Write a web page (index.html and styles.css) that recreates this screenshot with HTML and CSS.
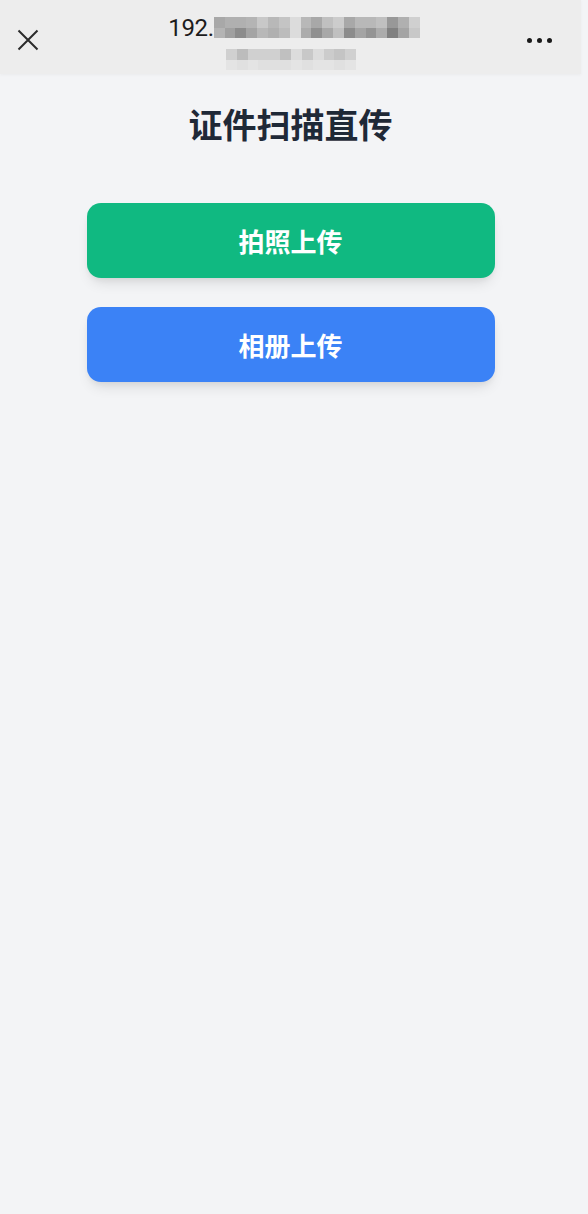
FILE: index.html
```html
<!DOCTYPE html>
<html lang="zh-CN">
<head>
<meta charset="utf-8">
<title>证件扫描直传</title>
<link rel="stylesheet" href="styles.css">
</head>
<body>
<div class="shell">
  <header class="topbar">
    <button class="icon-btn close" aria-label="关闭">
      <svg width="22" height="22" viewBox="0 0 22 22"><path d="M1.5 1.5 L20.5 20.5 M20.5 1.5 L1.5 20.5" stroke="#2b2b2b" stroke-width="2" fill="none"/></svg>
    </button>
    <div class="addr">
      <div class="addr-line">
        <span class="host">192.</span>
        <div class="mosaic m1">
          <i class="sa8"></i><i class="sb0"></i><i class="sb0"></i><i class="sb4"></i><i class="sc8"></i><i class="sb8"></i><i class="sc4"></i><i class="sdc"></i><i class="sb8"></i><i class="sa8"></i><i class="sc0"></i><i class="scc"></i><i class="sa8"></i><i class="sb8"></i><i class="sb8"></i><i class="sc0"></i><i class="s98"></i><i class="sb0"></i><i class="sd0"></i>
          <i class="sb4"></i><i class="sa0"></i><i class="s8c"></i><i class="sa4"></i><i class="sb8"></i><i class="sb0"></i><i class="sbc"></i><i class="sdc"></i><i class="sac"></i><i class="s90"></i><i class="sa8"></i><i class="sc0"></i><i class="s8c"></i><i class="sa4"></i><i class="s94"></i><i class="sac"></i><i class="s80"></i><i class="sa4"></i><i class="sc8"></i>
        </div>
      </div>
      <div class="mosaic m2">
        <i class="sd0"></i><i class="sbc"></i><i class="sd0"></i><i class="sd0"></i><i class="sd0"></i><i class="sc0"></i><i class="sdc"></i><i class="sc8"></i><i class="sdc"></i><i class="scc"></i><i class="sc4"></i><i class="sd0"></i>
        <i class="se4"></i><i class="se0"></i><i class="se4"></i><i class="se0"></i><i class="se0"></i><i class="se0"></i><i class="se4"></i><i class="se0"></i><i class="se4"></i><i class="se4"></i><i class="se0"></i><i class="se4"></i>
      </div>
    </div>
    <button class="icon-btn more" aria-label="更多">
      <span class="dot"></span><span class="dot"></span><span class="dot"></span>
    </button>
  </header>

  <main class="content">
    <h1 class="title">证件扫描直传</h1>
    <div class="actions">
      <button class="action green">拍照上传</button>
      <button class="action blue">相册上传</button>
    </div>
  </main>
</div>
</body>
</html>
```

FILE: styles.css
```css
* { box-sizing: border-box; }

html, body {
  margin: 0;
  padding: 0;
  background: #f3f4f6;
  height: 100%;
}

body {
  font-family: "Noto Sans CJK SC", "Noto Sans", sans-serif;
}

.shell {
  width: 581px;
  min-height: 1214px;
}

.topbar {
  height: 74px;
  background: #ededed;
  display: flex;
  align-items: center;
  justify-content: space-between;
  padding: 0 29px 0 17px;
  box-shadow: 0 1px 3px rgba(0,0,0,0.04);
}

.icon-btn {
  border: none;
  background: transparent;
  padding: 0;
  width: 40px;
  height: 40px;
  display: flex;
  align-items: center;
  cursor: pointer;
}

.close { justify-content: flex-start; margin-top: 6px; }

.more {
  justify-content: flex-end;
  gap: 5px;
  margin-top: 6px;
}

.dot {
  width: 5px;
  height: 5px;
  border-radius: 50%;
  background: #1a1a1a;
}

.addr {
  flex: 1;
  display: flex;
  flex-direction: column;
  align-items: center;
  padding-top: 12px;
  margin-left: 19px;
}

.addr-line {
  display: flex;
  align-items: flex-end;
}

.host {
  font-family: Roboto, "Noto Sans", sans-serif;
  font-size: 24px;
  line-height: 24px;
  color: #1c1c1c;
  letter-spacing: -0.3px;
  margin-bottom: -2px;
}

.mosaic {
  display: grid;
  grid-auto-rows: 10.5px;
}

.mosaic i { display: block; }

.m1 {
  grid-template-columns: repeat(19, 10.85px);
}

.m2 {
  grid-template-columns: repeat(12, 10.85px);
  margin-top: 11px;
  margin-left: -6px;
}

.s80 { background: #808080; }
.s8c { background: #8c8c8c; }
.s90 { background: #909090; }
.s94 { background: #949494; }
.s98 { background: #989898; }
.sa0 { background: #a0a0a0; }
.sa4 { background: #a4a4a4; }
.sa8 { background: #a8a8a8; }
.sac { background: #acacac; }
.sb0 { background: #b0b0b0; }
.sb4 { background: #b4b4b4; }
.sb8 { background: #b8b8b8; }
.sbc { background: #bcbcbc; }
.sc0 { background: #c0c0c0; }
.sc4 { background: #c4c4c4; }
.sc8 { background: #c8c8c8; }
.scc { background: #cccccc; }
.sd0 { background: #d0d0d0; }
.sdc { background: #dcdcdc; }
.se0 { background: #e0e0e0; }
.se4 { background: #e4e4e4; }

.content {
  display: flex;
  flex-direction: column;
  align-items: center;
}

.title {
  margin: 28px 0 0;
  font-size: 34px;
  line-height: 44px;
  font-weight: 700;
  color: #1f2937;
}

.actions {
  margin-top: 57px;
  display: flex;
  flex-direction: column;
  gap: 29px;
  width: 408px;
}

.action {
  height: 75px;
  border: none;
  border-radius: 14px;
  color: #ffffff;
  font-family: "Noto Sans CJK SC", "Noto Sans", sans-serif;
  font-size: 26px;
  font-weight: 700;
  letter-spacing: 0;
  cursor: pointer;
  box-shadow: 0 8px 14px -4px rgba(0,0,0,0.12), 0 3px 6px -2px rgba(0,0,0,0.06);
}

.green { background: #10b981; }
.blue { background: #3b82f6; }
```
